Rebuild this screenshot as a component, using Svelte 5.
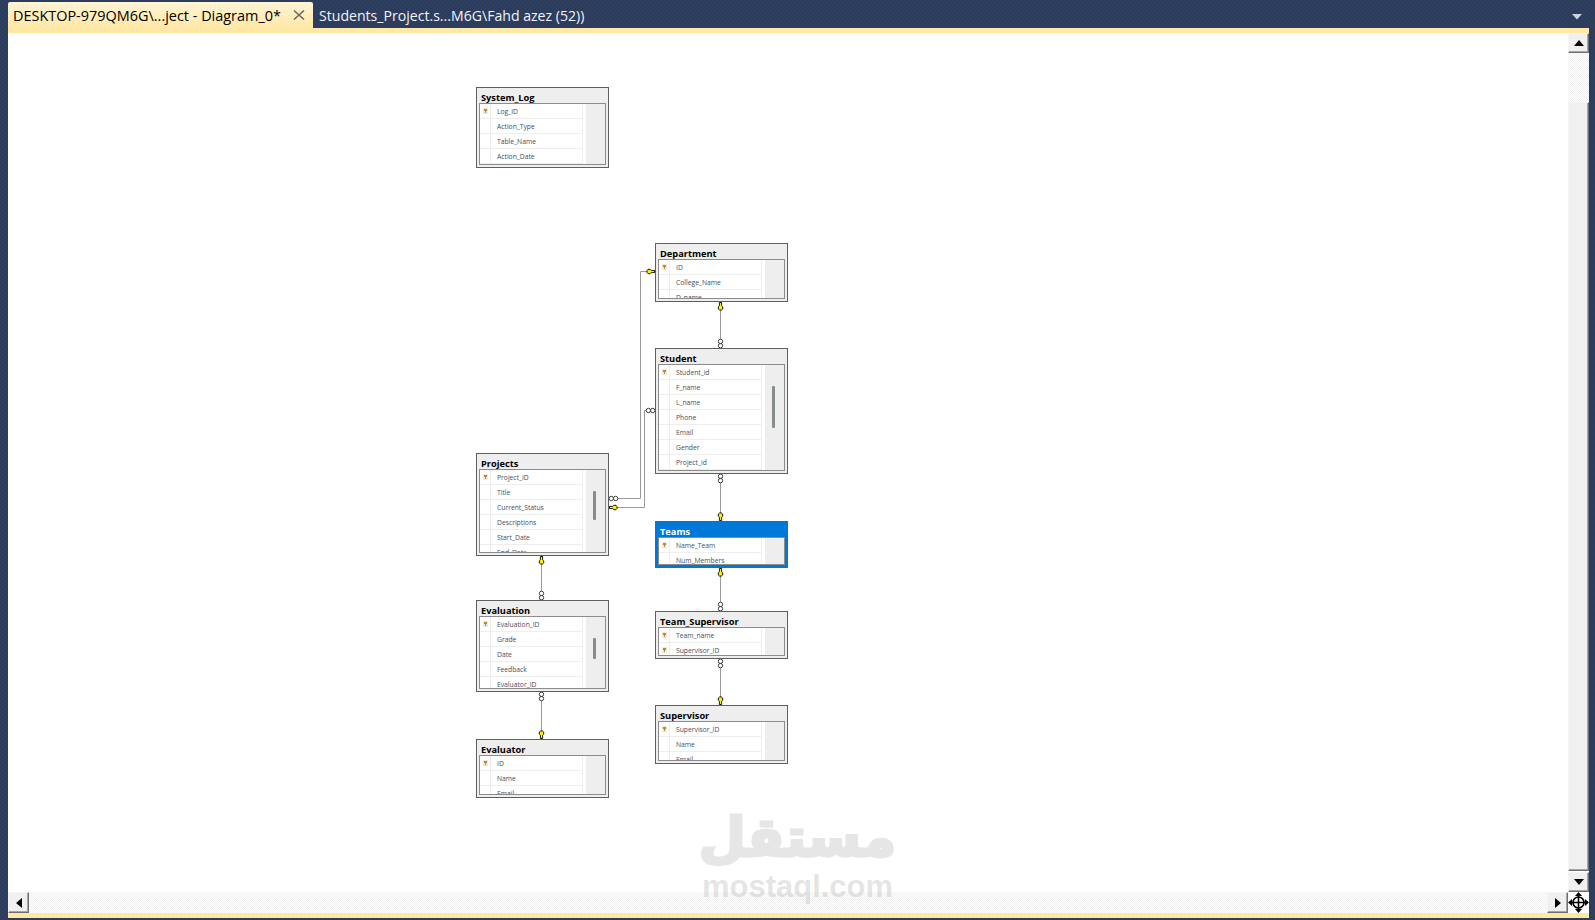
<script>
  // page coordinates from the screenshot, canvas starts at 8,33
  const originX = 8;
  const originY = 33;

  const tables = [
    { name: 'System_Log', x: 476, y: 87, h: 81, cols: ['Log_ID', 'Action_Type', 'Table_Name', 'Action_Date'], keys: 1 },
    { name: 'Department', x: 655, y: 243, h: 59, cols: ['ID', 'College_Name', 'D_name'], keys: 1 },
    { name: 'Student', x: 655, y: 348, h: 126, cols: ['Student_id', 'F_name', 'L_name', 'Phone', 'Email', 'Gender', 'Project_id'], keys: 1, thumb: [21, 42] },
    { name: 'Projects', x: 476, y: 453, h: 103, cols: ['Project_ID', 'Title', 'Current_Status', 'Descriptions', 'Start_Date', 'End_Date'], keys: 1, thumb: [21, 29] },
    { name: 'Teams', x: 655, y: 521, h: 47, cols: ['Name_Team', 'Num_Members'], keys: 1, selected: true },
    { name: 'Evaluation', x: 476, y: 600, h: 92, cols: ['Evaluation_ID', 'Grade', 'Date', 'Feedback', 'Evaluator_ID'], keys: 1, thumb: [21, 21] },
    { name: 'Team_Supervisor', x: 655, y: 611, h: 48, cols: ['Team_name', 'Supervisor_ID'], keys: 2 },
    { name: 'Supervisor', x: 655, y: 705, h: 59, cols: ['Supervisor_ID', 'Name', 'Email'], keys: 1 },
    { name: 'Evaluator', x: 476, y: 739, h: 59, cols: ['ID', 'Name', 'Email'], keys: 1 }
  ];

  const lines = [
    'M720.5 302V348',
    'M720.5 474V521',
    'M720.5 568V611',
    'M720.5 659V705',
    'M541.5 556V600',
    'M541.5 692V739',
    'M609 498.5H640.5V271.5H655',
    'M609 507.5H644.5V410.5H655'
  ];

  // a = direction away from the table edge
  const keyEnds = [
    { x: 720.5, y: 302, a: 90 },
    { x: 720.5, y: 521, a: -90 },
    { x: 720.5, y: 568, a: 90 },
    { x: 720.5, y: 705, a: -90 },
    { x: 541.5, y: 556, a: 90 },
    { x: 541.5, y: 739, a: -90 },
    { x: 655, y: 271.5, a: 180 },
    { x: 609, y: 507.5, a: 0 }
  ];

  const manyEnds = [
    { x: 720.5, y: 348, a: -90 },
    { x: 720.5, y: 474, a: 90 },
    { x: 720.5, y: 611, a: -90 },
    { x: 720.5, y: 659, a: 90 },
    { x: 541.5, y: 600, a: -90 },
    { x: 541.5, y: 692, a: 90 },
    { x: 609, y: 498.5, a: 0 },
    { x: 655, y: 410.5, a: 180 }
  ];
</script>

<div class="window">
  <div class="tabs">
    <div class="tab active">
      <span>DESKTOP-979QM6G\...ject - Diagram_0*</span>
      <svg class="close" width="12" height="12" viewBox="0 0 12 12">
        <path d="M1 1.5 11 10.5M11 1.5 1 10.5" stroke="#6d675c" stroke-width="1.6" fill="none" />
      </svg>
    </div>
    <div class="tab">Students_Project.s...M6G\Fahd azez (52))</div>
    <svg class="tab-menu" width="10" height="6" viewBox="0 0 10 6"><path d="M0 0H10L5 5.5Z" fill="#ced4de" /></svg>
  </div>
  <div class="stripe top"></div>

  <div class="body">
    <div class="canvas">
      <svg class="links" width="1560" height="859" viewBox="{originX} {originY} 1560 859">
        {#each lines as d}
          <path {d} fill="none" stroke="#9a9a9a" stroke-width="1" />
        {/each}
        {#each manyEnds as e}
          <g transform="translate({e.x} {e.y}) rotate({e.a})">
            <rect x="0" y="-3" width="9" height="6" fill="#fff" />
            <circle cx="2.3" cy="0" r="2.2" fill="#fff" stroke="#111" stroke-width="0.8" />
            <circle cx="6.6" cy="0" r="2.2" fill="#fff" stroke="#111" stroke-width="0.8" />
          </g>
        {/each}
        {#each keyEnds as e}
          <g transform="translate({e.x} {e.y}) rotate({e.a})">
            <path d="M0.5 -1.1H3.8L4.8 -2.2H7L8 -1.1V1.1L7 2.2H4.8L3.8 1.1H0.5Z" fill="#ffee00" stroke="#000" stroke-width="0.9" />
          </g>
        {/each}
      </svg>

      {#each tables as t}
        <div class="table" class:selected={t.selected} style="left:{t.x - originX}px;top:{t.y - originY}px;height:{t.h}px">
          <div class="title">{t.name}</div>
          <div class="grid">
            <div class="rows">
              {#each t.cols as col, i}
                <div class="row">
                  <div class="selector">
                    {#if i < t.keys}
                      <svg width="5" height="6" viewBox="0 0 5 6">
                        <rect width="5" height="6" fill="#efe9dd" />
                        <path d="M1 1H4V3H3V5H2V3H1Z" fill="#c08a2a" />
                      </svg>
                    {/if}
                  </div>
                  <div class="col">{col}</div>
                </div>
              {/each}
            </div>
            <div class="side">
              {#if t.thumb}
                <div class="thumb" style="margin-top:{t.thumb[0]}px;height:{t.thumb[1]}px"></div>
              {/if}
            </div>
          </div>
        </div>
      {/each}
    </div>

    <div class="vbar">
      <div class="btn vbtn">
        <svg width="10" height="6" viewBox="0 0 10 6"><path d="M0 6 5 0 10 6Z" fill="#000" /></svg>
      </div>
      <div class="track vtrack"></div>
      <div class="btn vthumb"></div>
      <div class="btn vbtn">
        <svg width="10" height="6" viewBox="0 0 10 6"><path d="M0 0H10L5 6Z" fill="#000" /></svg>
      </div>
    </div>
  </div>

  <div class="hbar">
    <div class="btn hbtn">
      <svg width="6" height="10" viewBox="0 0 6 10"><path d="M6 0V10L0 5Z" fill="#000" /></svg>
    </div>
    <div class="track htrack"></div>
    <div class="btn hbtn">
      <svg width="6" height="10" viewBox="0 0 6 10"><path d="M0 0V10L6 5Z" fill="#000" /></svg>
    </div>
    <div class="corner">
      <svg width="21" height="21" viewBox="0 0 21 21">
        <circle cx="10.5" cy="10.5" r="5.5" fill="none" stroke="#000" stroke-width="1.6" />
        <path d="M10.5 3V18M3 10.5H18" stroke="#000" stroke-width="1.6" />
        <path d="M10.5 0 14 4H7ZM10.5 21 7 17H14ZM0 10.5 4 7V14ZM21 10.5 17 14V7Z" fill="#000" />
      </svg>
    </div>
  </div>
  <div class="stripe bottom"></div>

  <div class="watermark">
    <div class="wm-ar" dir="rtl">مستقل</div>
    <div class="wm-en">mostaql.com</div>
  </div>
</div>

<style>
  :global(body) {
    margin: 0;
  }

  .window {
    position: relative;
    width: 1595px;
    height: 920px;
    box-sizing: border-box;
    padding: 0 6px 2px 8px;
    display: flex;
    flex-direction: column;
    overflow: hidden;
    background: repeating-conic-gradient(#2a3b5b 0 25%, #2e3f60 0 50%) 0 0 / 4px 4px;
  }

  .tabs {
    height: 28px;
    display: flex;
    align-items: flex-start;
    position: relative;
    padding-top: 2px;
    box-sizing: border-box;
    font-family: "Open Sans", "Noto Sans", sans-serif;
    font-size: 14.1px;
    white-space: nowrap;
  }

  .tab {
    height: 26px;
    line-height: 27px;
    padding-left: 6px;
    color: #f1f3f7;
  }

  .tab.active {
    width: 305px;
    height: 26px;
    box-sizing: border-box;
    padding-left: 5px;
    font-size: 14.45px;
    color: #000;
    display: flex;
    align-items: center;
    border-radius: 2px 2px 0 0;
    background: linear-gradient(#fff4d6, #ffe8a6);
  }

  .close {
    margin-left: 12px;
  }

  .tab-menu {
    position: absolute;
    right: 7px;
    top: 14px;
  }

  .stripe {
    background: #ffe8a6;
    flex: none;
  }

  .stripe.top {
    height: 5px;
  }

  .stripe.bottom {
    height: 5px;
  }

  .body {
    height: 859px;
    display: flex;
    flex: none;
  }

  .canvas {
    position: relative;
    flex: 1;
    background: #fff;
    overflow: hidden;
  }

  .links {
    position: absolute;
    left: 0;
    top: 0;
  }

  .table {
    position: absolute;
    width: 133px;
    box-sizing: border-box;
    border: 1px solid #5f5f5f;
    background: #eeeeee;
    display: flex;
    flex-direction: column;
    font-family: "Open Sans", "Noto Sans", sans-serif;
  }

  .title {
    height: 15px;
    line-height: 19px;
    flex: none;
    padding-left: 4px;
    font-size: 9.25px;
    font-weight: 700;
    color: #000;
    white-space: nowrap;
  }

  .selected {
    background: #0078d7;
    border-color: #0078d7;
  }

  .selected .title {
    color: #fff;
  }

  .grid {
    flex: 1;
    min-height: 0;
    margin: 0 2px 2px 2px;
    border: 1px solid #8c8c8c;
    background: #fff;
    display: flex;
    overflow: hidden;
  }

  .rows {
    width: 103px;
    flex: none;
    border-right: 1px solid #eeeeee;
    box-sizing: border-box;
  }

  .row {
    height: 15px;
    box-sizing: border-box;
    display: flex;
    border-bottom: 1px solid #eeeeee;
  }

  .selector {
    width: 11px;
    flex: none;
    box-sizing: border-box;
    padding-left: 1px;
    border-right: 1px solid #eeeeee;
    display: flex;
    align-items: center;
    justify-content: center;
  }

  .col {
    padding-left: 6px;
    font-size: 6.75px;
    line-height: 15px;
    color: #474e5c;
    white-space: nowrap;
  }

  .side {
    flex: 1;
    margin-left: 3px;
    background: #eeeeee;
    padding-left: 7px;
  }

  .thumb {
    width: 3px;
    background: #868e8c;
    border-radius: 1px;
  }

  .vbar {
    width: 21px;
    flex: none;
    display: flex;
    flex-direction: column;
    background: #fff;
  }

  .btn {
    box-sizing: border-box;
    background: #f0f0f0;
    border: 1px solid;
    border-color: #f5f5f5 #6f6f6f #6f6f6f #f5f5f5;
    box-shadow: inset -1px -1px 0 #a6a6a6;
    display: flex;
    align-items: center;
    justify-content: center;
  }

  .vbtn {
    height: 20px;
    flex: none;
  }

  .track {
    background: repeating-conic-gradient(#f0f0f0 0 25%, #fff 0 50%) 0 0 / 2px 2px;
  }

  .vtrack {
    height: 49px;
    flex: none;
  }

  .vthumb {
    flex: 1;
    margin-bottom: 1px;
  }

  .hbar {
    height: 21px;
    flex: none;
    display: flex;
    background: #fff;
  }

  .hbtn {
    width: 21px;
    flex: none;
  }

  .htrack {
    flex: 1;
  }

  .corner {
    width: 21px;
    flex: none;
    background: #fff;
  }

  .watermark {
    position: absolute;
    left: 702px;
    top: 802px;
    width: 191px;
    display: flex;
    flex-direction: column;
    align-items: center;
    pointer-events: none;
    font-weight: 700;
  }

  .wm-ar {
    height: 72px;
    font-family: "DejaVu Sans", sans-serif;
    font-size: 54px;
    line-height: 72px;
    white-space: nowrap;
    color: #e6e6e6;
    -webkit-text-stroke: 3px #e6e6e6;
  }

  .wm-en {
    font-family: "Liberation Sans", sans-serif;
    font-size: 31px;
    line-height: 25px;
    white-space: nowrap;
    color: rgba(140, 140, 140, 0.24);
  }
</style>
